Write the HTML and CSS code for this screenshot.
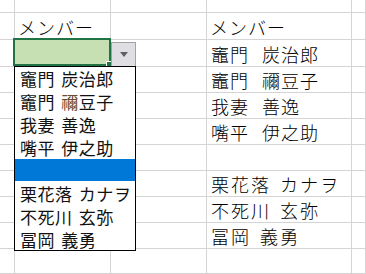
FILE: index.html
```html
<!DOCTYPE html>
<html lang="ja">
<head>
<meta charset="UTF-8">
<title>メンバー</title>
<link rel="stylesheet" href="styles.css">
</head>
<body>
<div class="sheet">
    <div class="cell"></div><div class="cell"></div><div class="cell"></div><div class="cell"></div><div class="cell"></div>

    <div class="cell"></div><div class="cell txt hd">メンバー</div><div class="cell"></div><div class="cell txt hd">メンバー</div><div class="cell"></div>
    <div class="cell"></div><div class="cell"></div><div class="cell"></div><div class="cell txt">竈門 炭治郎</div><div class="cell"></div>
    <div class="cell"></div><div class="cell"></div><div class="cell"></div><div class="cell txt">竈門 禰豆子</div><div class="cell"></div>
    <div class="cell"></div><div class="cell"></div><div class="cell"></div><div class="cell txt">我妻 善逸</div><div class="cell"></div>
    <div class="cell"></div><div class="cell"></div><div class="cell"></div><div class="cell txt">嘴平 伊之助</div><div class="cell"></div>
    <div class="cell"></div><div class="cell"></div><div class="cell"></div><div class="cell txt"></div><div class="cell"></div>
    <div class="cell"></div><div class="cell"></div><div class="cell"></div><div class="cell txt wide">栗花落 カナヲ</div><div class="cell"></div>
    <div class="cell"></div><div class="cell"></div><div class="cell"></div><div class="cell txt wide">不死川 玄弥</div><div class="cell"></div>
    <div class="cell"></div><div class="cell"></div><div class="cell"></div><div class="cell txt wide">冨岡 義勇</div><div class="cell"></div>
    <div class="cell"></div><div class="cell"></div><div class="cell"></div><div class="cell"></div><div class="cell"></div>

    <!-- active cell with its validation dropdown -->
    <div class="selected"><span class="handle"></span></div>
    <div class="drop-btn"><span class="arrow"></span></div>
    <ul class="drop-list">
        <li>竈門 炭治郎</li>
        <li>竈門 <span class="odd">禰</span>豆子</li>
        <li>我妻 善逸</li>
        <li>嘴平 伊之助</li>
        <li class="active"></li>
        <li>栗花落 カナヲ</li>
        <li>不死川 玄弥</li>
        <li>冨岡 義勇</li>
    </ul>
</div>
</body>
</html>
```

FILE: styles.css
```css
body {
    margin: 0;
    padding: 0;
    background: #fff;
    overflow: hidden;
}

.sheet {
    position: relative;
    width: 366px;
    height: 274px;
    display: grid;
    grid-template-columns: 15px 96px 96px 145px 14px;
    grid-template-rows: 13px 27px 27px 26px 26px 26px 26px 26px 26px 26px 25px;
    font-family: "Noto Sans CJK JP", sans-serif;
    color: #000;
}

.cell {
    box-sizing: border-box;
    border-right: 1px solid #d4d4d4;
    border-bottom: 1px solid #d4d4d4;
}

.txt {
    display: flex;
    align-items: flex-end;
    padding: 0 0 1px 4px;
    font-size: 18px;
    font-weight: 300;
    line-height: 22px;
    letter-spacing: 1px;
    word-spacing: 8px;
    white-space: pre;
    overflow: visible;
}

.hd {
    padding-left: 3px;
    letter-spacing: 1px;
}

.wide {
    letter-spacing: 2px;
    word-spacing: 3px;
}

.selected {
    position: absolute;
    left: 13px;
    top: 38px;
    width: 98px;
    height: 28px;
    box-sizing: border-box;
    border: 2px solid #217346;
    background: #c6e0b4;
}

.handle {
    position: absolute;
    right: -3px;
    bottom: -3px;
    width: 4px;
    height: 4px;
    background: #217346;
    border: 1px solid #fff;
}

.drop-btn {
    position: absolute;
    left: 111px;
    top: 42px;
    width: 25px;
    height: 24px;
    box-sizing: border-box;
    background: #dedee3;
    border: 1px solid #a3a3a3;
    border-bottom: none;
    display: flex;
    align-items: center;
    justify-content: center;
}

.arrow {
    width: 0;
    height: 0;
    border-left: 4px solid transparent;
    border-right: 4px solid transparent;
    border-top: 5px solid #5f5f5f;
}

.drop-list {
    position: absolute;
    left: 14px;
    top: 66px;
    width: 122px;
    height: 185px;
    box-sizing: border-box;
    margin: 0;
    padding: 0;
    list-style: none;
    background: #fff;
    border: 1px solid #000;
    display: grid;
    grid-template-rows: repeat(8, 1fr);
}

.drop-list li {
    padding: 2px 0 0 5px;
    font-size: 17px;
    line-height: 20px;
    letter-spacing: 0.5px;
    word-spacing: 2px;
    display: flex;
    align-items: center;
    white-space: pre;
    color: #111;
}

.drop-list .active {
    background: #0078d7;
}

.odd {
    color: #6a4a30;
}
```
